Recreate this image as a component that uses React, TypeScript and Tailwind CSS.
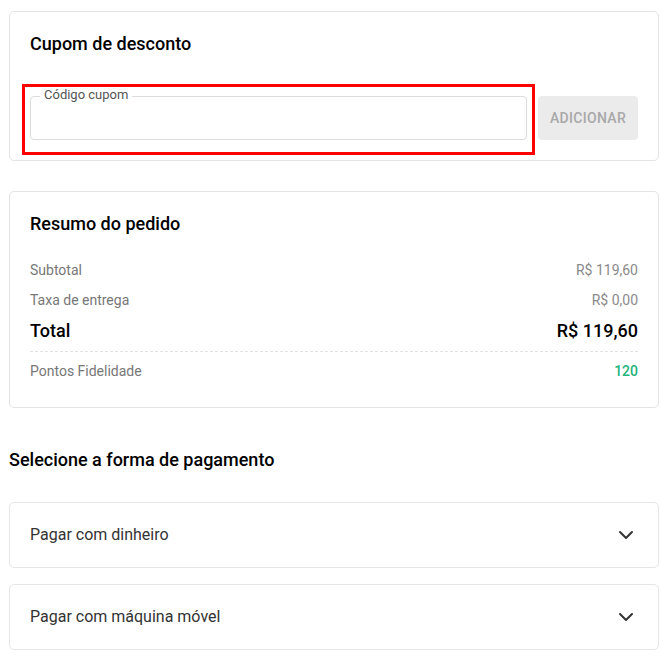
import { ChevronDown } from "lucide-react";

const rows = [
  { label: "Subtotal", value: "R$ 119,60" },
  { label: "Taxa de entrega", value: "R$ 0,00" },
];

const payments = ["Pagar com dinheiro", "Pagar com máquina móvel"];

export default function App() {
  return (
    <div
      className="min-h-screen bg-white pt-[11px] pl-[9px] text-[#1a1a1a]"
      style={{ fontFamily: "Roboto, 'Noto Sans', sans-serif" }}
    >
      <div className="w-[650px]">
        {/* Cupom */}
        <section className="rounded-[5px] border border-[#e4e4e4] px-5 pt-5 pb-5">
          <h2 className="text-[18px] font-medium leading-6 text-black">Cupom de desconto</h2>
          <div className="mt-10 flex items-center gap-[11px]">
            <div className="relative flex-1">
              <div className="pointer-events-none absolute -left-[8px] -right-[8px] -top-[12px] -bottom-[15px] border-[3px] border-[#ff0000]"></div>
              <div className="relative h-[44px] rounded-[4px] border border-[#dcdcdc]">
                <span className="absolute -top-[10px] left-[9px] bg-white px-1 text-[13px] leading-4 text-[#555]">
                  Código cupom
                </span>
              </div>
            </div>
            <button className="h-[44px] w-[100px] rounded-[4px] bg-[#ebebeb] text-[14px] font-medium tracking-[0.3px] text-[#a8a8a8]">
              ADICIONAR
            </button>
          </div>
        </section>

        {/* Resumo */}
        <section className="mt-[30px] rounded-[5px] border border-[#e4e4e4] px-5 pt-5 pb-[21px]">
          <h2 className="text-[18px] font-medium leading-6 text-black">Resumo do pedido</h2>
          <div className="mt-[19px]">
            {rows.map((r) => (
              <div key={r.label} className="flex h-[30px] items-center justify-between text-[14px]">
                <span className="text-[#777]">{r.label}</span>
                <span className="text-[#8a8a8a]">{r.value}</span>
              </div>
            ))}
            <div className="flex h-[30px] items-center justify-between text-[18px] font-medium text-black">
              <span>Total</span>
              <span>R$ 119,60</span>
            </div>
            <div className="mt-[6px] border-t border-dashed border-[#e2e2e2]"></div>
            <div className="mt-[4px] flex h-[30px] items-center justify-between text-[14px]">
              <span className="text-[#777]">Pontos Fidelidade</span>
              <span className="font-medium text-[#22b47c]">120</span>
            </div>
          </div>
        </section>

        {/* Pagamento */}
        <h2 className="mt-[40px] text-[18px] font-medium leading-6 text-black">
          Selecione a forma de pagamento
        </h2>
        <div className="mt-[30px] flex flex-col gap-[16px]">
          {payments.map((p) => (
            <div
              key={p}
              className="flex h-[66px] items-center justify-between rounded-[5px] border border-[#e6e6e6] pl-5 pr-5"
            >
              <span className="text-[16px] text-[#333]">{p}</span>
              <ChevronDown size={24} strokeWidth={2} className="text-[#333]" />
            </div>
          ))}
        </div>
      </div>
    </div>
  );
}
